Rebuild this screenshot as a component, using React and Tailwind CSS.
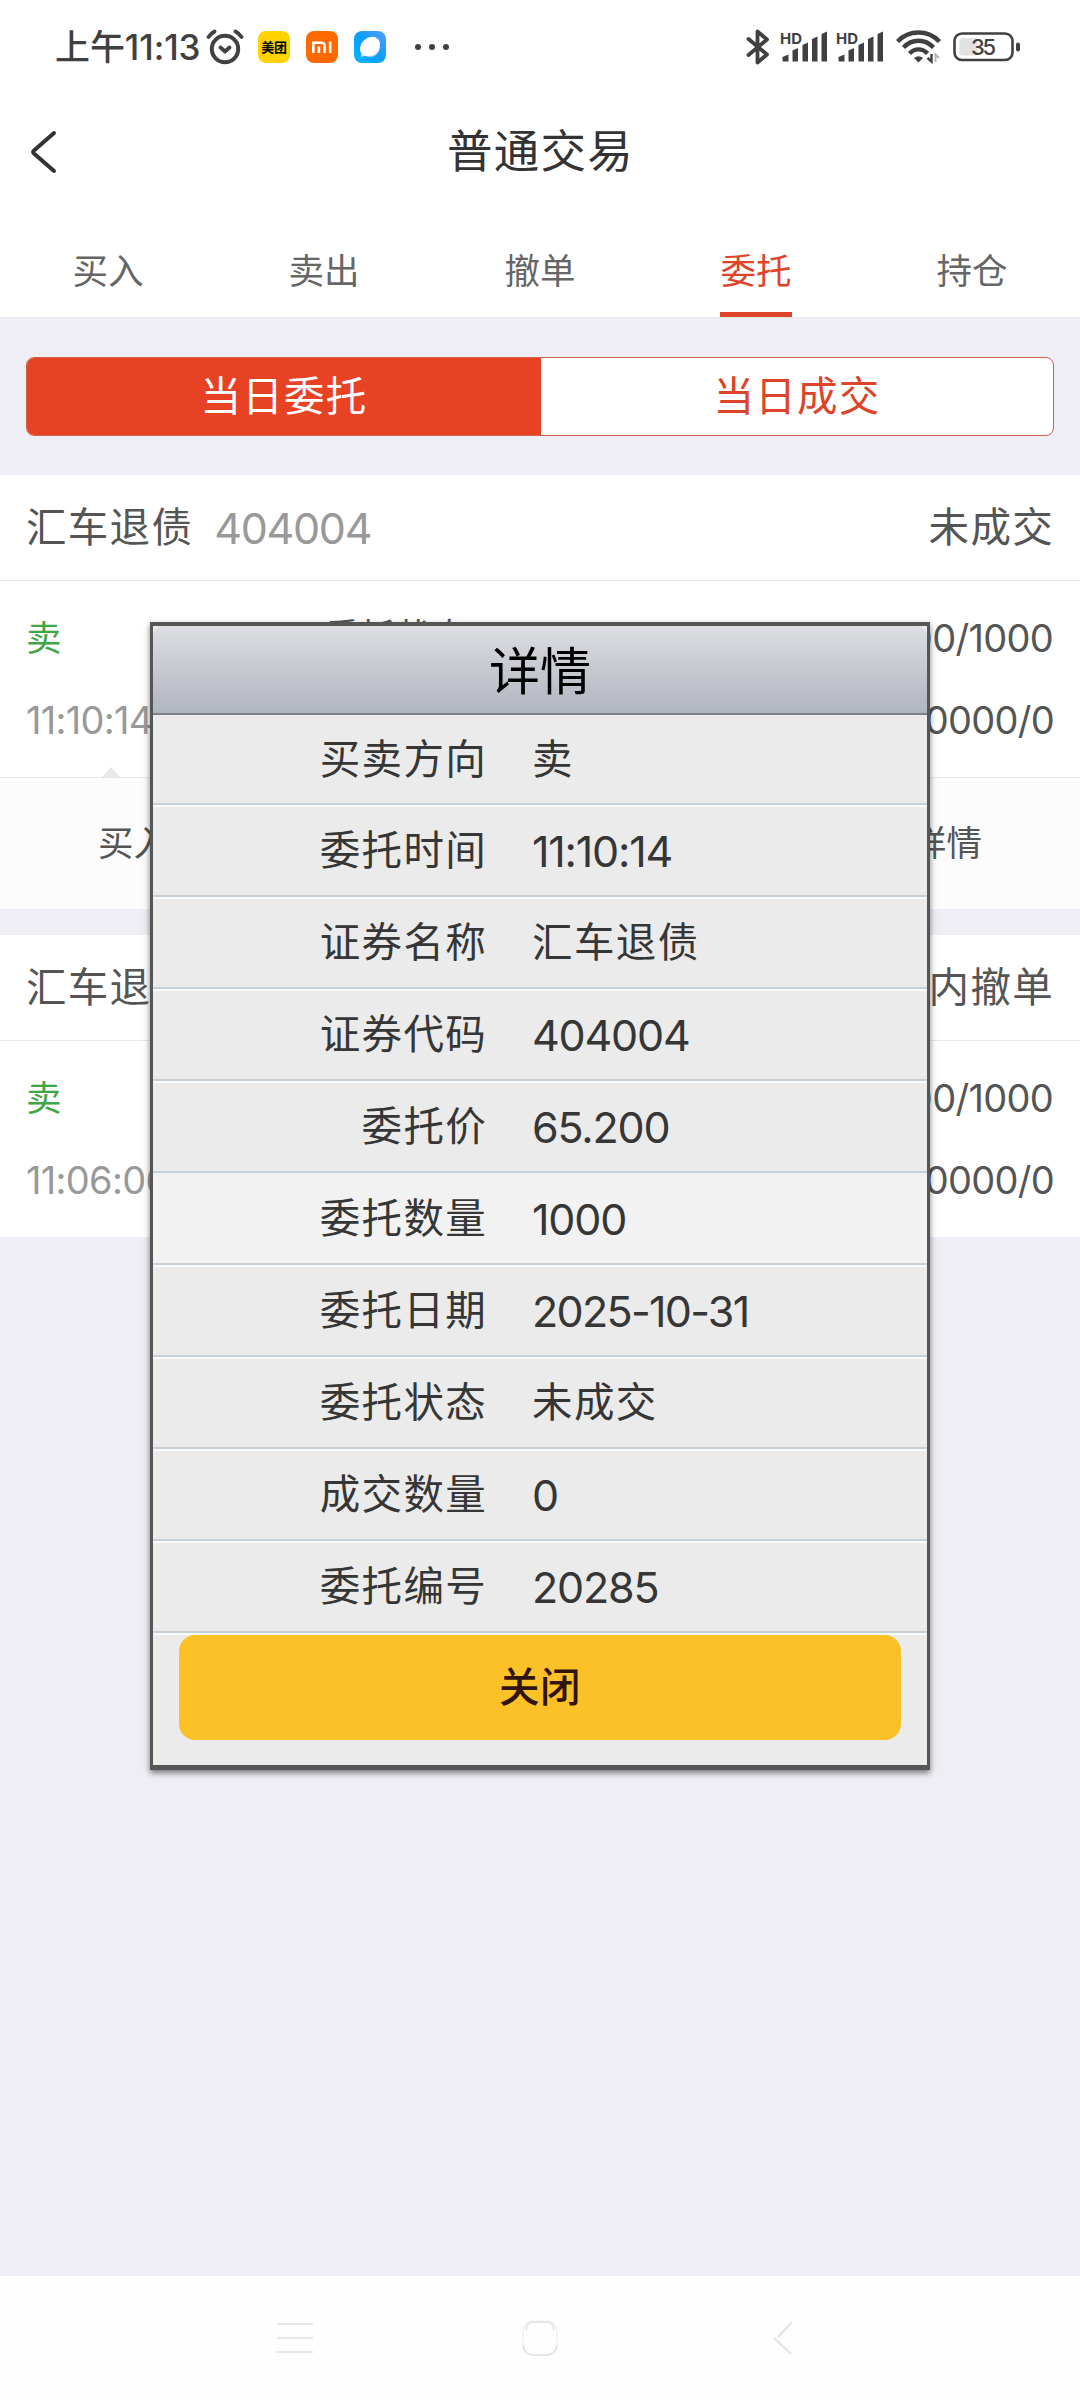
const tabs = ["买入", "卖出", "撤单", "委托", "持仓"];

const orders = [
  {
    name: "汇车退债",
    code: "404004",
    status: "未成交",
    side: "卖",
    time: "11:10:14",
    price: "65.200/1000",
    filled: "0.0000/0",
    expanded: true,
  },
  {
    name: "汇车退债",
    code: "404004",
    status: "场内撤单",
    side: "卖",
    time: "11:06:06",
    price: "65.200/1000",
    filled: "0.0000/0",
    expanded: false,
  },
];

const details = [
  ["买卖方向", "卖"],
  ["委托时间", "11:10:14"],
  ["证券名称", "汇车退债"],
  ["证券代码", "404004"],
  ["委托价", "65.200"],
  ["委托数量", "1000"],
  ["委托日期", "2025-10-31"],
  ["委托状态", "未成交"],
  ["成交数量", "0"],
  ["委托编号", "20285"],
];

function AlarmIcon() {
  return (
    <svg className="w-[38px] h-[36px]" viewBox="0 0 38 36" fill="none" stroke="#404040" strokeLinecap="round">
      <circle cx="19" cy="20" r="13.2" strokeWidth="4" />
      <path d="M14.5 18.5l4.5 4 4.5-4" strokeWidth="3.8" strokeLinejoin="round" />
      <path d="M2.5 8C4.5 5 6 3.8 8.5 2.5M35.5 8C33.5 5 32 3.8 29.5 2.5" strokeWidth="3.8" />
    </svg>
  );
}

function BluetoothIcon() {
  return (
    <svg className="w-[24px] h-[38px]" viewBox="0 0 24 38" fill="none" stroke="#404040" strokeWidth="3.8" strokeLinecap="round" strokeLinejoin="round">
      <path d="M2.5 11L21 26.5 11.5 34.5V3.5L21 11.5 2.5 27" />
    </svg>
  );
}

function Signal() {
  return (
    <svg className="w-[48px] h-[34px] overflow-visible" viewBox="0 0 48 34" fill="#404040">
      <text x="0" y="13.5" fontSize="15" fontWeight="700" fontFamily="Inter, sans-serif" textLength="22">
        HD
      </text>
      <path d="M2.5 31v-4l6-2.5v7H3.5zM12.5 31.5V20.5l5.5-2.5v13.5zM22.5 31.5V15l5.5-2.5v19zM32 31.5V9l5.5-2.5v25zM41.5 31.5V4l5.5-2.5v30z" />
    </svg>
  );
}

function WifiIcon() {
  return (
    <svg className="w-[46px] h-[34px]" viewBox="0 0 46 34" fill="none" stroke="#404040" strokeWidth="4.4">
      <path d="M1.5 11.5C13-.5 32-.5 43.5 11.5" />
      <path d="M7.5 17.5C16 8.5 29 8.5 37.5 17.5" />
      <path d="M13.5 23.5C18.5 18 26.5 18 31.5 23.5" />
      <path d="M18 28a7 7 0 0 1 9 0l-4.5 4.5z" fill="#404040" stroke="none" />
      <path d="M31.5 28l4 3.5V24" strokeWidth="2.4" />
      <path d="M39.5 32v-7.5l3.5 3.5" stroke="#b5b5b5" strokeWidth="2" />
    </svg>
  );
}

function BatteryIcon() {
  return (
    <svg className="w-[68px] h-[30px]" viewBox="0 0 68 30" fill="none">
      <rect x="1.5" y="1.5" width="58" height="26.5" rx="7.5" stroke="#404040" strokeWidth="2.6" />
      <rect x="6.5" y="6" width="18" height="17.5" rx="3" fill="#e2e2e2" />
      <rect x="63" y="10.5" width="4" height="9" rx="2" fill="#404040" />
      <text x="30.5" y="22.5" fontSize="22" fontWeight="500" fontFamily="Inter, sans-serif" textAnchor="middle" textLength="25" fill="#404040">
        35
      </text>
    </svg>
  );
}

function StatusBar() {
  return (
    <div className="flex h-[94px] items-center bg-white pl-[55px] pr-[59px] text-[#404040]">
      <span className="w-[151px] whitespace-nowrap text-[35px] font-medium leading-[46px] tracking-[-0.1px]">上午11:13</span>
      <AlarmIcon />
      <span className="ml-[14px] flex h-[32px] w-[32px] items-center justify-center rounded-[8px] bg-[#ffd200] text-[13px] font-bold leading-none tracking-tight text-black">
        美团
      </span>
      <svg className="ml-[16px] w-[32px] h-[32px]" viewBox="0 0 32 32">
        <rect width="32" height="32" rx="8" fill="#ff6900" />
        <path d="M7.3 22V11.8h8.2c2 0 3 1 3 3V22M12.9 15.5V22M24.2 10.5V22" fill="none" stroke="#fff" strokeWidth="2.6" />
      </svg>
      <svg className="ml-[16px] w-[32px] h-[32px]" viewBox="0 0 32 32">
        <defs>
          <linearGradient id="browser" x1="0" y1="1" x2="1" y2="0">
            <stop offset="0" stopColor="#00b7ff" />
            <stop offset="0.5" stopColor="#0a9dff" />
            <stop offset="1" stopColor="#5b9cf5" />
          </linearGradient>
        </defs>
        <rect width="32" height="32" rx="8" fill="url(#browser)" />
        <path d="M25.500 12c1.500 5-.5 10-4.500 12.500-3 1.800-7 1.500-9.500.5z" fill="#cfe3ff" />
        <path d="M7 25.500c-.5-1 0-2.500 1-4l3.500 3c-2 1-3.500 1.500-4.500 1z" fill="#cfe3ff" />
        <ellipse cx="16" cy="15.500" rx="11" ry="8.700" fill="#fff" transform="rotate(-42 16 15.5)" />
      </svg>
      <span className="ml-[29px] flex gap-[8px]">
        <i className="h-[6px] w-[6px] rounded-full bg-[#404040]" />
        <i className="h-[6px] w-[6px] rounded-full bg-[#404040]" />
        <i className="h-[6px] w-[6px] rounded-full bg-[#404040]" />
      </span>
      <div className="ml-auto flex items-center">
        <BluetoothIcon />
        <span className="ml-[10px] flex gap-[8px]">
          <Signal />
          <Signal />
        </span>
        <span className="ml-[12px]">
          <WifiIcon />
        </span>
        <span className="ml-[11px]">
          <BatteryIcon />
        </span>
      </div>
    </div>
  );
}

function OrderCard({ order }) {
  return (
    <section className="bg-white text-[#555]">
      <div className="flex h-[106px] items-center border-b border-[#e8e8e8] px-[26px] pt-[2px] text-[40.5px] tracking-[1.3px]">
        <span>{order.name}</span>
        <span className="ml-[21px] text-[43px] tracking-[-1.3px] text-[#999]">{order.code}</span>
        <span className="ml-auto">{order.status}</span>
      </div>
      <div className="flex h-[196px] flex-col px-[26px] pt-[16px] text-[38px] tracking-[-0.7px]">
        <div className="flex h-[83px] items-center">
          <span className="w-[299px] text-[35.5px] text-[#3fa648]">{order.side}</span>
          {order.expanded && <span className="pb-[4px] text-[35.5px] tracking-normal">委托状态</span>}
          <span className="ml-auto mr-px">{order.price}</span>
        </div>
        <div className="flex h-[81px] items-center">
          <span className="text-[#999]">{order.time}</span>
          <span className="ml-auto">{order.filled}</span>
        </div>
      </div>
      {order.expanded && (
        <div className="relative flex h-[132px] items-center justify-between border-t border-[#e8e8e8] bg-[#fcfcfc] px-[98px] text-[35.5px]">
          <span className="absolute -top-[11px] left-[101px] border-x-[10px] border-b-[11px] border-x-transparent border-b-[#e8e8e8]" />
          <span>买入</span>
          <span>详情</span>
        </div>
      )}
    </section>
  );
}

function DetailDialog() {
  return (
    <div className="absolute left-[150px] top-[622px] flex h-[1148px] w-[780px] flex-col border-[3px] border-t-4 border-b-[5px] border-[#555655] bg-[#ebebeb] shadow-[0_3px_6px_rgba(0,0,0,0.5)]">
      <div className="flex h-[89px] shrink-0 items-center justify-center rounded-t-[10px] border-b-2 border-[#7e8185] bg-linear-to-b from-[#dddee2] to-[#b1b5bf] pt-[5px] text-[51px] text-black">
        详情
      </div>
      {details.map(([label, value]) => (
        <div
          key={label}
          className={`flex h-[92px] shrink-0 items-center border-b-2 border-[#c8d0d7] pt-[3px] text-[40.5px] text-[#363636] shadow-[0_2px_0_#f8fafb] nth-2:h-[90px] ${
            label === "委托数量" ? "bg-[#f2f2f2]" : ""
          }`}
        >
          <span className="w-[334px] text-right tracking-[1.3px]">{label}</span>
          <span
            className={`ml-[45px] ${
              value.includes("-") ? "text-[43px] tracking-[-1.7px]" : /\d/.test(value) ? "text-[43px] tracking-[-1.2px]" : "tracking-[1.4px]"
            }`}
          >
            {value}
          </span>
        </div>
      ))}
      <button className="mx-[26px] mt-[2px] h-[105px] rounded-[16px] bg-[#fcc127] pt-px text-[40.5px] font-medium tracking-[0.5px] text-[#32140f]">关闭</button>
    </div>
  );
}

function NavBar() {
  return (
    <nav className="mt-auto flex h-[124px] items-center bg-[#fefefe] pl-[277px]">
      <svg className="w-[37px] h-[34px]" viewBox="0 0 37 34" stroke="#e6e6e6" strokeWidth="2">
        <path d="M0 3h36M0 17h36M0 31h36" />
      </svg>
      <svg className="ml-[208px] w-[36px] h-[36px]" viewBox="0 0 36 36" fill="none" stroke="#e6e6e6">
        <rect x="1" y="1" width="34" height="34" rx="10" stroke="#f4f4f4" strokeWidth="1.5" />
        <path d="M4 10C5 4 7 2 12 2h12c5 0 7 2 8 8M1 25c1 7 4 10 10 10h14c6 0 9-3 10-10" strokeWidth="2" />
      </svg>
      <svg className="ml-[215px] w-[20px] h-[34px]" viewBox="0 0 20 34" fill="none" stroke="#e2e2e2" strokeWidth="2">
        <path d="M19 1L5 16M1 17l17 16" />
      </svg>
    </nav>
  );
}

export default function App() {
  return (
    <div className="relative flex h-[2400px] w-[1080px] flex-col overflow-hidden bg-[#efeef4] font-[Inter,'Noto_Sans_CJK_SC',sans-serif]">
      <StatusBar />

      <header className="flex h-[118px] items-center bg-white pb-[2px] pl-[31px] text-[#333]">
        <svg className="w-[26px] h-[44px]" viewBox="0 0 26 44" fill="none" stroke="#333" strokeWidth="4" strokeLinecap="round" strokeLinejoin="round">
          <path d="M23 3L3 20.5c-1.2 1.1-1.2 1.900 0 3L23 41" />
        </svg>
        <h1 className="flex-1 pr-[56px] pt-px text-center text-[45.5px] tracking-[1.3px]">普通交易</h1>
      </header>

      <nav className="flex h-[106px] border-b border-[#e8e8e8] bg-white text-[35.5px] text-[#666]">
        {tabs.map((tab) => (
          <div key={tab} className="flex flex-1 justify-center">
            <span
              className={`flex h-full w-[72px] items-center justify-center border-b-[5px] pt-[19px] whitespace-nowrap ${
                tab === "委托" ? "border-[#dd4429] text-[#dd4429]" : "border-transparent"
              }`}
            >
              {tab}
            </span>
          </div>
        ))}
      </nav>

      <div className="h-[157px] px-[26px] pt-[39px]">
        <div className="flex h-[79px] overflow-hidden rounded-[8px] border border-[#d0614c] bg-white text-[40.5px]">
          <button className="w-[514px] bg-[#e84224] pt-[2px] tracking-[1.3px] text-white">当日委托</button>
          <button className="flex-1 pt-[2px] tracking-[1.3px] text-[#dd4429]">当日成交</button>
        </div>
      </div>

      <div className="flex flex-col gap-[26px]">
        {orders.map((order) => (
          <OrderCard key={order.time} order={order} />
        ))}
      </div>

      <NavBar />
      <DetailDialog />
    </div>
  );
}
